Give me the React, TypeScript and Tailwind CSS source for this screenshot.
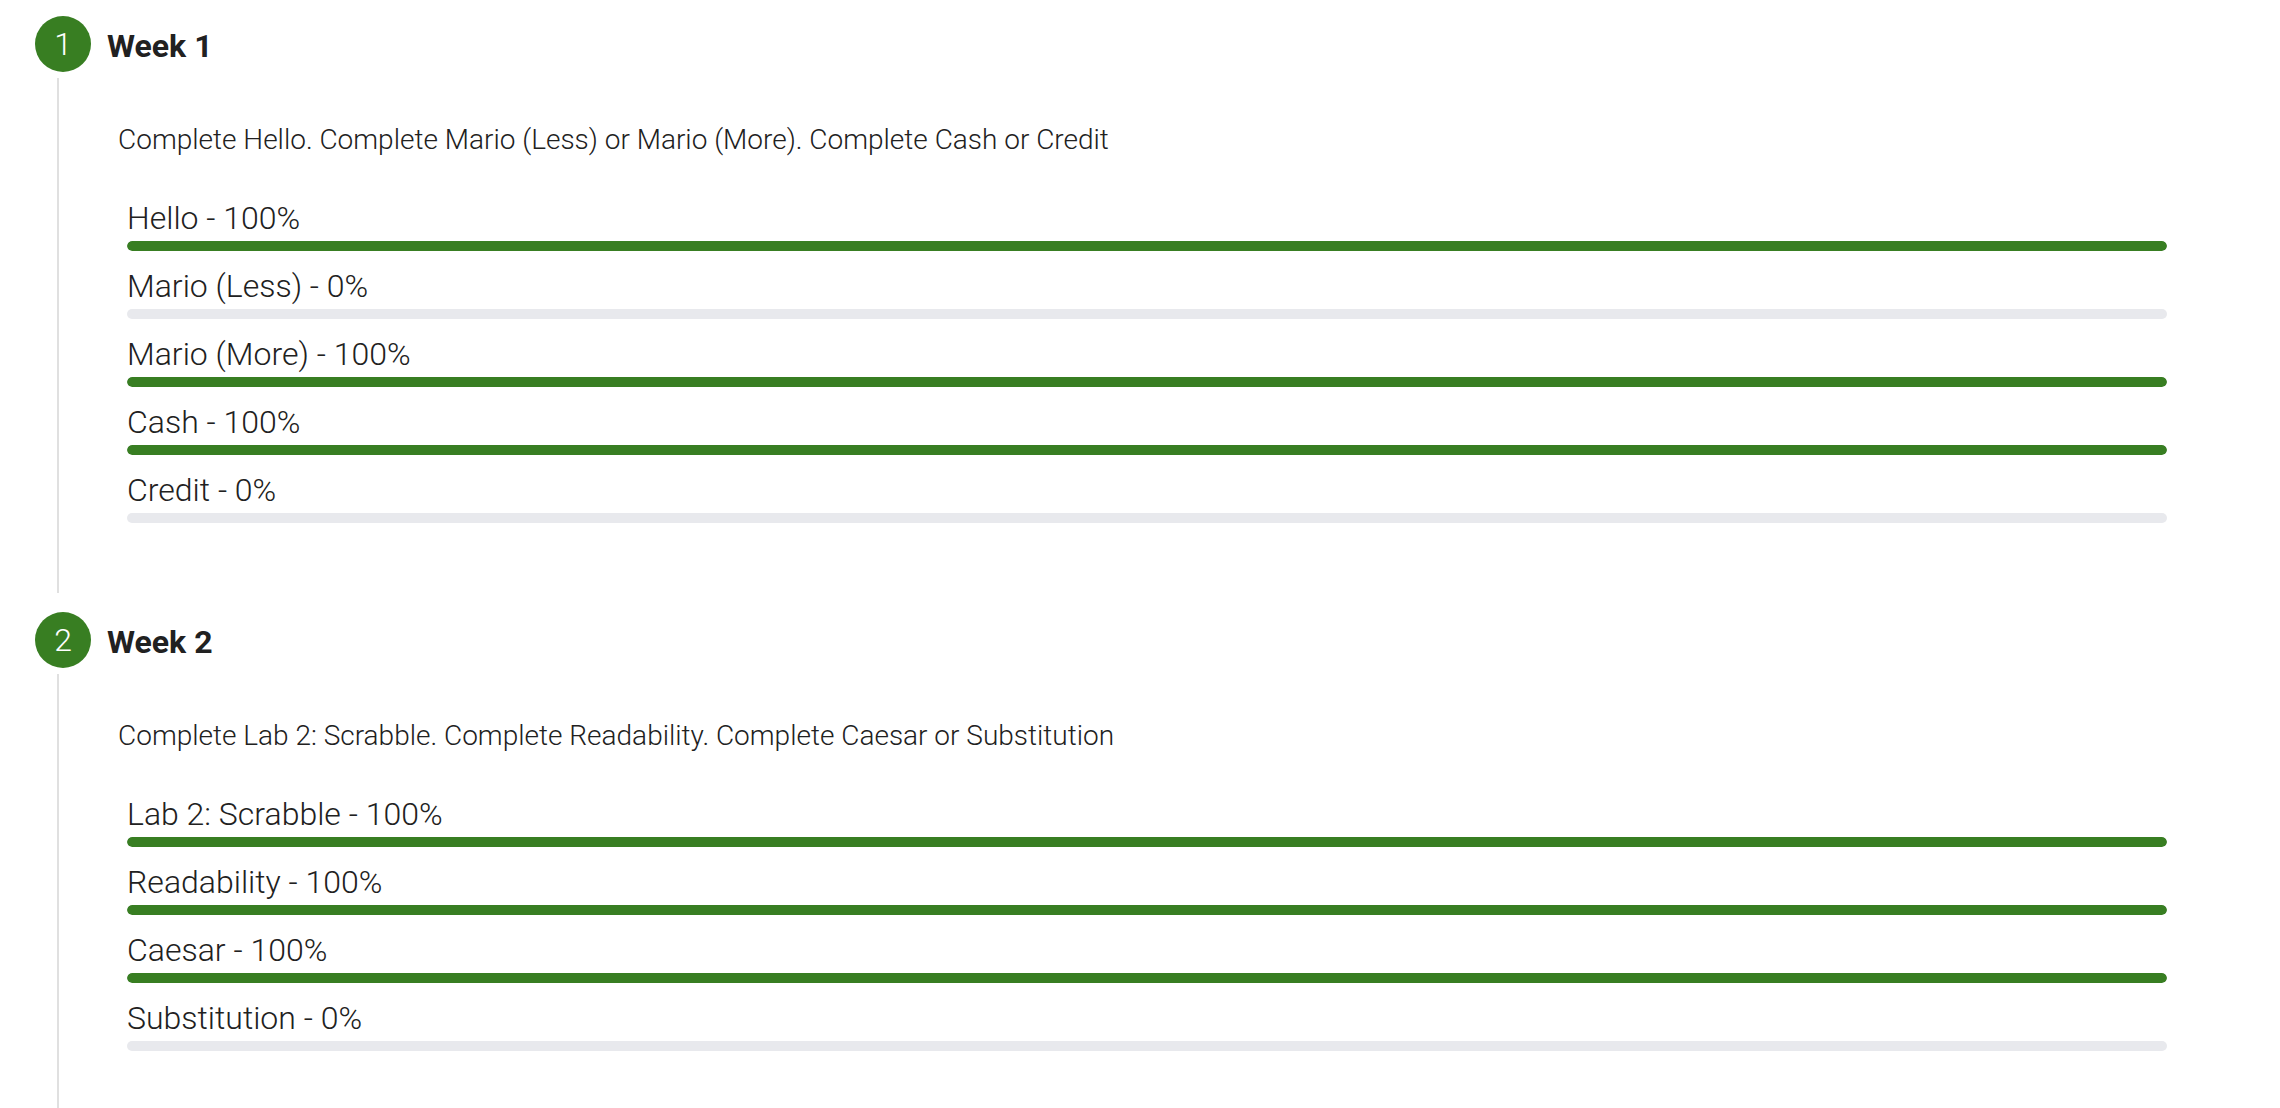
import React from "react";

type Item = { name: string; pct: number };
type Week = { n: number; title: string; desc: string; items: Item[] };

const weeks: Week[] = [
  {
    n: 1,
    title: "Week 1",
    desc: "Complete Hello. Complete Mario (Less) or Mario (More). Complete Cash or Credit",
    items: [
      { name: "Hello", pct: 100 },
      { name: "Mario (Less)", pct: 0 },
      { name: "Mario (More)", pct: 100 },
      { name: "Cash", pct: 100 },
      { name: "Credit", pct: 0 },
    ],
  },
  {
    n: 2,
    title: "Week 2",
    desc: "Complete Lab 2: Scrabble. Complete Readability. Complete Caesar or Substitution",
    items: [
      { name: "Lab 2: Scrabble", pct: 100 },
      { name: "Readability", pct: 100 },
      { name: "Caesar", pct: 100 },
      { name: "Substitution", pct: 0 },
    ],
  },
];

function Step({ week }: { week: Week }) {
  return (
    <div className="flex flex-col">
      <div className="flex items-center pl-[35px] gap-[16px]">
        <div className="w-[56px] h-[56px] rounded-full bg-[#387e22] flex items-center justify-center text-white text-[32px] font-light leading-none">
          {week.n}
        </div>
        <div className="text-[32px] font-bold text-[#212121] leading-none mt-[3px]">{week.title}</div>
      </div>
      <div className="ml-[57px] mt-[6px] mb-[19px] border-l-2 border-[#e0e0e0] h-[515px] pt-[41px]">
        <div className="pl-[59px] text-[28px] font-light leading-[42px] text-[#212121]">{week.desc}</div>
        <div className="pl-[68px] pr-[113px] mt-[34px] flex flex-col gap-[12px]">
          {week.items.map((it) => (
            <div key={it.name} className="flex flex-col">
              <div className="text-[32px] font-light leading-[46px] text-[#212121]">
                {it.name} - {it.pct}%
              </div>
              <div className="h-[10px] rounded-full bg-[#e8e9ed] overflow-hidden">
                <div className="h-full rounded-full bg-[#387e22]" style={{ width: `${it.pct}%` }} />
              </div>
            </div>
          ))}
        </div>
      </div>
    </div>
  );
}

export default function App() {
  return (
    <div className="w-[2280px] h-[1108px] overflow-hidden bg-white pt-[16px]" style={{ fontFamily: "Roboto, 'Noto Sans', sans-serif" }}>
      {weeks.map((w) => (
        <Step key={w.n} week={w} />
      ))}
    </div>
  );
}
